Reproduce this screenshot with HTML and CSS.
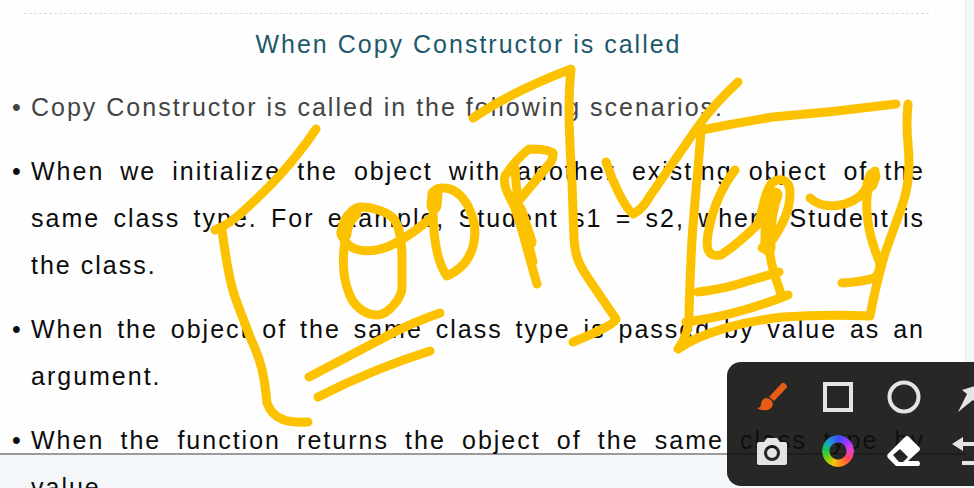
FILE: index.html
```html
<!DOCTYPE html>
<html lang="en">
<head>
<meta charset="utf-8">
<title>When Copy Constructor is called</title>
<link rel="stylesheet" href="styles.css">
</head>
<body>
<main class="slide">
  <h1 class="slide-title">When Copy Constructor is called</h1>
  <ul class="points">
    <li class="point intro"><p>Copy Constructor is called in the following scenarios:</p></li>
    <li class="point"><p>When we initialize the object with another existing object of the same class type. For example, Student s1 = s2, where Student is the&nbsp;class.</p></li>
    <li class="point"><p>When the object of the same class type is passed by value as an argument.</p></li>
    <li class="point"><p>When the function returns the object of the same class type by value.</p></li>
  </ul>
</main>

<svg class="ink" width="974" height="488" viewBox="0 0 974 488" aria-hidden="true">
  <!-- left bracket -->
  <path d="M316 129C291 166 267 190 239 215Q229 224 215 230M222 230C225 252 228 276 234 294C240 312 244 320 250 337C258 354 262 366 264 379Q266 392 267 403C273 420 288 423 308 422"/>
  <!-- OOP -->
  <path d="M345 240C341 229 350 207 361 207C373 207 387 212 393 218C401 227 402 245 402 263V287C402 298 388 315 377 315C364 315 353 305 349 293C341 274 343 254 345 240ZM341 232C347 256 374 252 387 247C404 240 417 230 432 217"/>
  <path class="wide" d="M354 213Q345 221 344 234"/>
  <path d="M433 207C432 194 433 187 443 188C455 188 463 197 468 206C482 234 474 264 447 276C436 261 433 236 433 207"/>
  <path class="wide" d="M435 194L434 206"/>
  <path d="M521 198L551 162Q554 155 553 153C546 149 539 149 529 149C521 155 511 167 505 176C502 188 512 199 518 215Q526 246 537 284M515 168Q516 188 519 205L533 262"/>
  <path class="wide" d="M519 211L529 242"/>
  <!-- right bracket -->
  <path d="M473 118Q511 92 571 69C567 105 570 145 572 183L574 239C575 258 580 266 590 281L616 319Q615 325 573 342"/>
  <!-- tick -->
  <path d="M606 162C612 180 624 207 633 214Q643 209 650 196L697 128Q713 105 738 82"/>
  <!-- box -->
  <path d="M702 130Q736 123 773 117Q835 112 896 104M701 130C698 176 692 223 691 260Q689 302 689 321Q687 337 678 349C702 332 745 321 783 317Q826 314 870 316C874 294 879 274 885 253L902 206C910 184 910 164 908 144Q906 124 908 104"/>
  <!-- copy -->
  <path d="M735 170C722 187 712 210 708 234C705 252 710 257 721 255C733 247 745 237 757 225C764 212 762 197 771 184C778 177 790 178 790 193C790 210 783 224 773 239L762 248"/>
  <path class="wide" d="M775 195Q767 214 768 248"/>
  <path d="M769 246Q770 259 774 273L781 294M698 292Q724 289 745 282L779 272M686 322C715 318 745 312 788 295"/>
  <path d="M810 198C823 210 850 208 864 192Q870 181 875 171M870 184C864 197 867 226 873 244Q877 257 880 263Q880 274 874 278Q861 282 842 283"/>
  <path class="wide" d="M873 176L870 184"/>
  <!-- double underline -->
  <path d="M309 377L387 336Q411 323 440 313M318 397Q373 369 430 351"/>
</svg>

<div class="toolbar" role="toolbar" aria-label="Drawing tools">
  <button class="tool brush" type="button" aria-label="Brush">
    <svg width="34" height="34" viewBox="0 0 34 34"><path fill="currentColor" d="M27 3Q29 2 31 4.500Q33 7 31 8.500L19 21L14 17ZM12 18Q17 19 18 24C17 31 8 32 2 28Q6 28 6 24Q7 18 12 18Z"/></svg>
  </button>
  <button class="tool" type="button" aria-label="Rectangle">
    <svg width="34" height="34" viewBox="0 0 34 34"><path fill="none" stroke="currentColor" stroke-width="4" d="M4 4H30V30H4Z"/></svg>
  </button>
  <button class="tool" type="button" aria-label="Ellipse">
    <svg width="34" height="34" viewBox="0 0 34 34"><circle cx="17" cy="17" r="14.500" fill="none" stroke="currentColor" stroke-width="4"/></svg>
  </button>
  <button class="tool" type="button" aria-label="Arrow">
    <svg width="34" height="34" viewBox="0 0 34 34"><path fill="currentColor" d="M5 32L14 14L9 10L31 3L25 25L20 20Z"/></svg>
  </button>
  <button class="tool" type="button" aria-label="Screenshot">
    <svg width="34" height="34" viewBox="0 0 34 34"><path fill="currentColor" fill-rule="evenodd" d="M4 8H9L12 4H22L25 8H30Q32 8 32 10V29Q32 31 30 31H4Q2 31 2 29V10Q2 8 4 8ZM17 11A8 8 0 1 0 17 27A8 8 0 1 0 17 11Z"/><circle cx="17" cy="19" r="5" fill="currentColor"/></svg>
  </button>
  <button class="tool" type="button" aria-label="Color"><span class="color-ring"></span></button>
  <button class="tool eraser" type="button" aria-label="Eraser">
    <svg width="34" height="34" viewBox="0 0 34 34"><path fill="currentColor" fill-rule="evenodd" d="M18 3Q20 1 22 3L32 13Q34 15 32 17L21 27H31Q33 27 33 29.500Q33 32 31 32H9L1 24Q-1 21 2 19ZM13 15L6 21L12 28H16L21 23Z"/></svg>
  </button>
  <button class="tool" type="button" aria-label="Undo">
    <svg width="34" height="34" viewBox="0 0 34 34"><path fill="currentColor" d="M-1 10L10 3V8H25Q34 8 34 18.500Q34 31 25 31H9V27H25Q30 27 30 18.500Q30 12 25 12H10V17Z"/></svg>
  </button>
</div>
</body>
</html>
```
FILE: styles.css
```css
* {
  box-sizing: border-box;
}

body {
  margin: 0;
  height: 100vh;
  overflow: hidden;
  position: relative;
  background: #f3f7f9;
  color: #0c0c0c;
  font-family: "Liberation Sans", Arial, sans-serif;
  font-size: 25px;
  line-height: 47px;
  letter-spacing: 2px;
}

/* The last point runs over the page break */
.slide {
  height: calc(100vh - 33px);
  margin-right: 8px;
  padding: 13px 32px 0 12px;
  background: #fefefe;
  border-right: 1px solid #e6eaec;
  border-bottom: 2px solid #999b9c;
}

.slide-title {
  margin: 0 4px 16px 12px;
  padding: 7px 16px 0 0;
  border-top: 1px dashed #dcdcdc;
  color: #20586b;
  font-size: 25px;
  font-weight: 400;
  text-align: center;
}

.points {
  display: grid;
  gap: 17px;
  margin: 0;
  padding: 0 8px 0 0;
  list-style: none;
}

.point {
  display: grid;
  grid-template-columns: 19px 1fr;
}

.point::before {
  content: "•";
}

.point p {
  margin: 0;
  text-align: justify;
}

.intro {
  color: #444;
}

.ink {
  position: absolute;
  top: 0;
  left: 0;
  fill: none;
  stroke: #fcc200;
  stroke-width: 9;
  stroke-linecap: round;
  stroke-linejoin: round;
}

.ink .wide {
  stroke-width: 15;
}

.toolbar {
  position: absolute;
  right: -41px;
  bottom: 2px;
  display: grid;
  grid-template-columns: repeat(4, 66px);
  grid-auto-rows: 54px;
  padding: 8px 12px;
  border-radius: 14px;
  background: rgba(15, 16, 14, 0.9);
}

.tool {
  display: grid;
  place-items: center;
  padding: 0;
  border: 0;
  background: none;
  color: #e4e4e4;
}

.tool svg {
  overflow: visible;
}

.brush {
  color: #e55d16;
}

.eraser {
  color: #fff;
}

.color-ring {
  width: 32px;
  height: 32px;
  border-radius: 50%;
  background: conic-gradient(#3b50ff, #9a35ff 45deg, #e13de0 80deg, #ff4558 125deg, #ff8a18 165deg, #f2c60c 200deg, #72ce14 240deg, #18c35c 275deg, #169fd0 315deg, #3b50ff);
  mask: radial-gradient(circle, transparent 8px, #000 9px);
}
```
